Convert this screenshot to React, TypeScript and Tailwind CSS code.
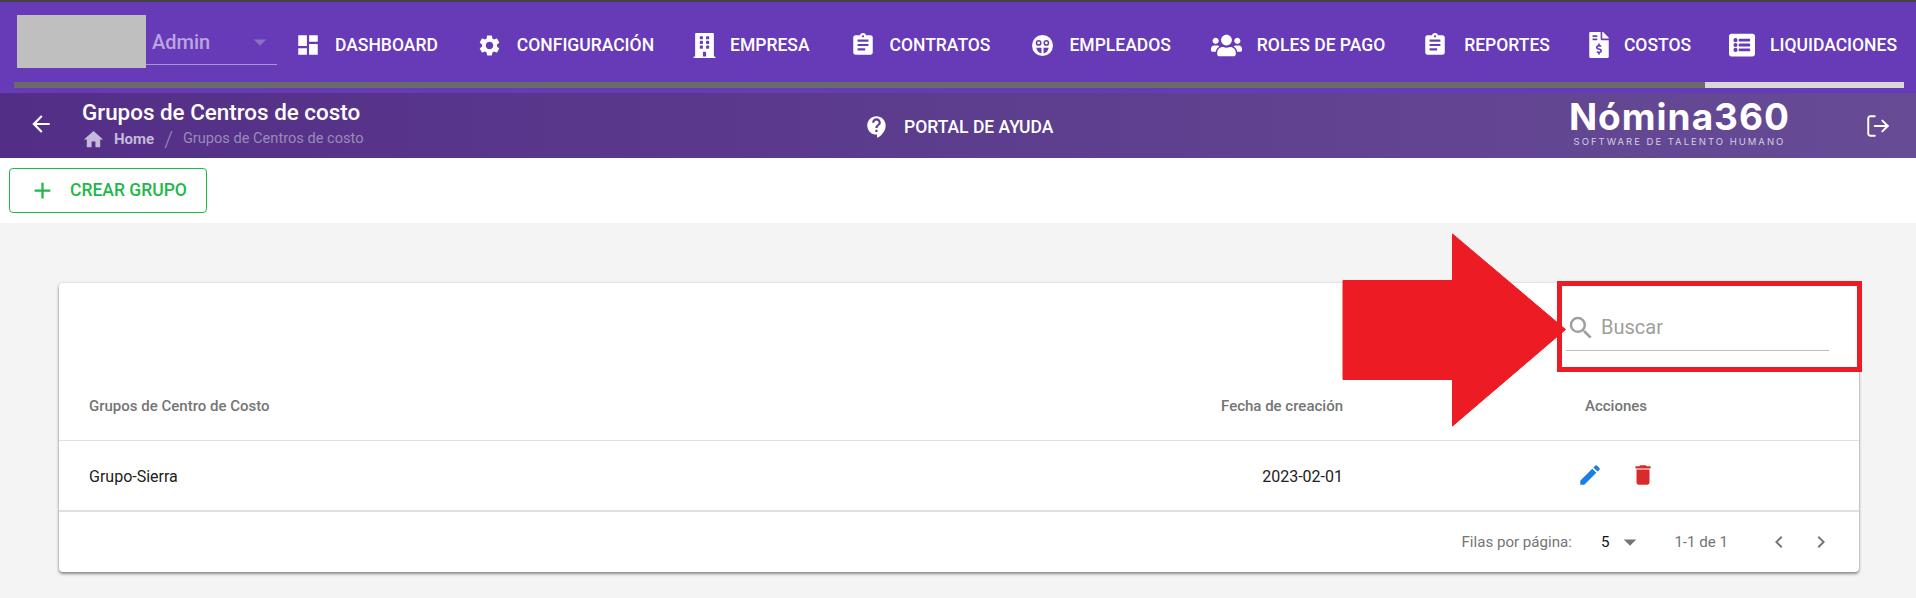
import {
  MdAdd,
  MdArrowBack,
  MdArrowDropDown,
  MdAssignment,
  MdChevronLeft,
  MdChevronRight,
  MdContactSupport,
  MdDashboard,
  MdDelete,
  MdEdit,
  MdHome,
  MdSearch,
  MdSettings,
} from "react-icons/md";
import { FaBuilding, FaFileInvoiceDollar, FaListAlt, FaUsers } from "react-icons/fa";
import { LogOut } from "lucide-react";

const FaceIcon = ({ className }: { className?: string }) => (
  <svg className={className} width="1em" height="1em" viewBox="0 0 24 24">
    <circle cx="12" cy="12" r="12" fill="#fff" />
    <circle cx="7.600" cy="9" r="3.300" fill="#673ab7" />
    <circle cx="16.400" cy="9" r="3.300" fill="#673ab7" />
    <circle cx="7.600" cy="9" r="1.600" fill="#fff" />
    <circle cx="16.400" cy="9" r="1.600" fill="#fff" />
    <path d="M5 14.500h14c-.5 4-3.500 6.500-7 6.500s-6.500-2.500-7-6.500z" fill="#673ab7" />
    <rect x="10.800" y="13" width="2.400" height="8.500" fill="#fff" />
  </svg>
);

const menu = [
  { label: "DASHBOARD", Icon: MdDashboard, cls: "ml-0 gap-[14px]", size: "text-[26px]" },
  { label: "CONFIGURACIÓN", Icon: MdSettings, cls: "ml-[39px] gap-[15px]", size: "text-[25px]" },
  { label: "EMPRESA", Icon: FaBuilding, cls: "ml-[38px] gap-[13px]", size: "text-[25px]" },
  { label: "CONTRATOS", Icon: MdAssignment, cls: "ml-[40px] gap-[14px]", size: "text-[26px]" },
  { label: "EMPLEADOS", Icon: FaceIcon, cls: "ml-[42px] gap-[16px]", size: "text-[21px]" },
  { label: "ROLES DE PAGO", Icon: FaUsers, cls: "ml-[40px] gap-[15px]", size: "text-[31px]" },
  { label: "REPORTES", Icon: MdAssignment, cls: "ml-[37px] gap-[16px]", size: "text-[26px]" },
  { label: "COSTOS", Icon: FaFileInvoiceDollar, cls: "ml-[36px] gap-[12px]", size: "text-[26px]" },
  { label: "LIQUIDACIONES", Icon: FaListAlt, cls: "ml-[38px] gap-[15px]", size: "text-[26px]" },
];

const TopBar = () => (
  <div className="h-[93px] border-t-2 border-[#444] bg-[#673ab7]">
    <div className="flex h-[80px]">
      <div className="ml-[17px] mt-[13px] h-[53px] w-[129px] bg-[#bfbfbf]" />
      <div className="mt-[13px] flex h-[50px] w-[131px] items-center justify-between border-b border-[#a994d6] pl-[6px] pr-[2px] pt-[4px] text-[20px] font-medium text-[#b9a6e0]">
        <span>Admin</span>
        <MdArrowDropDown className="text-[30px] text-[#8a70c4]" />
      </div>
      <nav className="ml-[18px] mt-[6px] flex items-center whitespace-nowrap">
        {menu.map(({ label, Icon, cls, size }) => (
          <div key={label} className={`flex items-center text-[17.5px] font-medium text-white ${cls}`}>
            <Icon className={size} />
            <span>{label}</span>
          </div>
        ))}
      </nav>
    </div>
    <div className="ml-[14px] mr-[12px] flex h-[6px] bg-[#6a6a6a]">
      <div className="ml-auto w-[199px] bg-[#d8d8d8]" />
    </div>
  </div>
);

const SubBar = () => (
  <div className="flex h-[65px] items-center whitespace-nowrap bg-gradient-to-r from-[#532e87] to-[#674b95] text-white">
    <MdArrowBack className="ml-[28px] -mt-[3px] text-[26px]" />
    <div className="ml-[28px] -mt-[3px] w-[500px]">
      <div className="text-[22.4px] font-medium leading-[28px]">Grupos de Centros de costo</div>
      <div className="mt-[2px] flex h-[22px] items-center text-[14.6px] text-[#9a8ab8]">
        <MdHome className="text-[23px] text-[#c5b9dc]" />
        <span className="ml-[9px] text-[15px] font-bold text-[#c5b9dc]">Home</span>
        <span className="mx-[10px] text-[22px] font-light">/</span>
        <span>Grupos de Centros de costo</span>
      </div>
    </div>
    <div className="ml-[282px] mt-[3px] flex items-center gap-[14px] text-[17.5px] font-medium">
      <MdContactSupport className="text-[26px]" />
      <span>PORTAL DE AYUDA</span>
    </div>
    <div className="ml-auto -mt-[5px] flex flex-col items-center font-['Inter',sans-serif]">
      <span className="text-[37px] font-bold leading-[38px] tracking-[1px]">Nómina360</span>
      <span className="text-[9.5px] leading-[12px] tracking-[2px] text-[#d5cde4]">SOFTWARE DE TALENTO HUMANO</span>
    </div>
    <LogOut className="ml-[75px] mr-[25px]" size={26} strokeWidth={1.8} />
  </div>
);

const DataTable = () => (
  <div className="ml-[59px] mt-[60px] h-[289px] w-[1800px] rounded-[4px] bg-white shadow-[0_2px_3px_rgba(0,0,0,0.4),0_0_3px_rgba(0,0,0,0.15)]">
    <div className="flex h-[89px] justify-end pr-[30px] pt-[22px]">
      <div className="flex h-[46px] w-[263px] items-center gap-[5px] border-b border-[#bdbdbd] text-[#9e9e9e]">
        <MdSearch className="text-[30px]" />
        <span className="-mt-[1px] text-[20px]">Buscar</span>
      </div>
    </div>
    <div className="flex h-[69px] items-center border-b border-[#e0e0e0] text-[15px] font-medium text-[#757575]">
      <span className="flex-1 pl-[30px]">Grupos de Centro de Costo</span>
      <span>Fecha de creación</span>
      <span className="w-[516px] pl-[242px]">Acciones</span>
    </div>
    <div className="flex h-[71px] items-center border-b-2 border-[#e0e0e0] text-[16px] text-[#212121]">
      <span className="mt-[2px] flex-1 pl-[30px]">Grupo-Sierra</span>
      <span className="mt-[2px]">2023-02-01</span>
      <div className="-mt-[2px] flex w-[516px] items-center gap-[27px] pl-[234px] text-[26px]">
        <MdEdit className="text-[#1a7fe0]" />
        <MdDelete className="text-[#d92b2b]" />
      </div>
    </div>
    <div className="flex h-[58px] items-center justify-end pr-[26px] pt-[2px] text-[15.1px] text-[#757575]">
      <span>Filas por página:</span>
      <span className="ml-[29px] text-[#111]">5</span>
      <MdArrowDropDown className="ml-[6px] text-[30px]" />
      <span className="ml-[29px]">1-1 de 1</span>
      <MdChevronLeft className="ml-[39px] text-[24px]" />
      <MdChevronRight className="ml-[18px] text-[24px]" />
    </div>
  </div>
);

export default function App() {
  return (
    <div className="relative h-[598px] w-[1916px] overflow-hidden bg-[#f4f4f4] font-['Roboto',sans-serif]">
      <TopBar />
      <SubBar />
      <div className="h-[65px] bg-white pl-[9px] pt-[10px]">
        <button className="flex h-[45px] w-[198px] items-center rounded-[4px] border border-[#1fb84a] pl-[19px] text-[17.5px] font-medium text-[#1fb84a]">
          <MdAdd className="text-[27px]" />
          <span className="ml-[14px]">CREAR GRUPO</span>
        </button>
      </div>
      <DataTable />
      {/* annotation drawn on top of the screenshot */}
      <svg className="absolute left-[1342px] top-[233px]" width="225" height="194" viewBox="0 0 225 194">
        <path d="M1 47.500H110.500V1L223.500 96.500L110.500 193V146.500H1Z" fill="#ed1c24" stroke="#ed1c24" strokeLinejoin="round" />
      </svg>
      <div className="absolute left-[1557px] top-[281px] h-[91px] w-[305px] border-[5px] border-[#ed1c24]" />
    </div>
  );
}
